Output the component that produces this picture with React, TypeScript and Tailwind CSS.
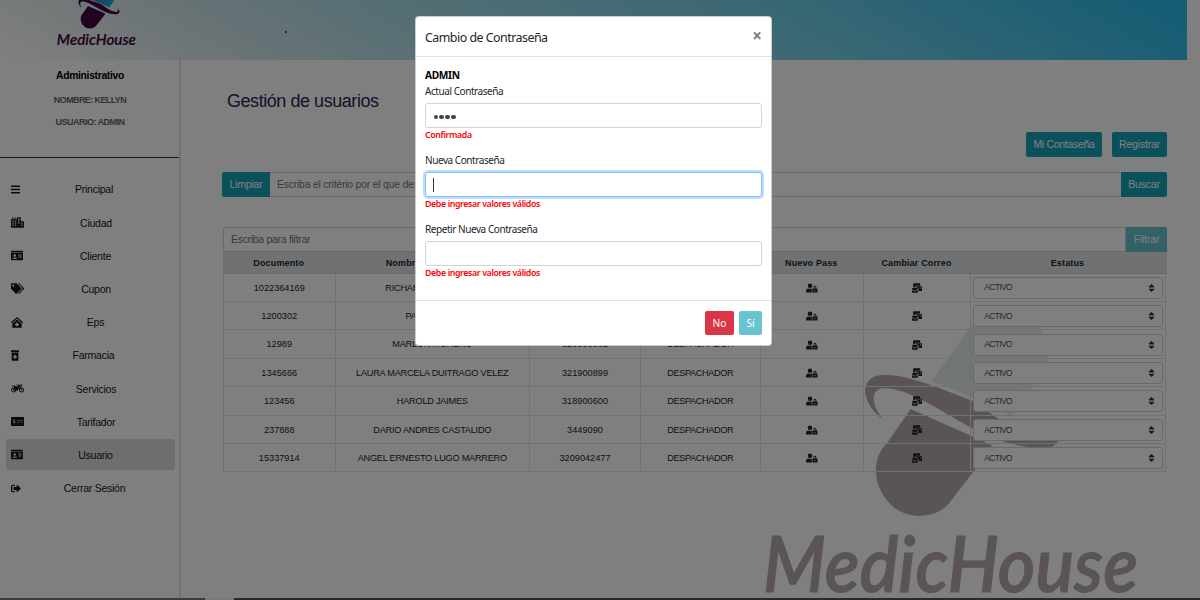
import React from "react";
import {
  FaBars, FaCity, FaIdCard, FaTags, FaClinicMedical, FaPrescriptionBottleAlt,
  FaMotorcycle, FaMoneyCheckAlt, FaSignOutAlt, FaUserLock, FaMailBulk, FaSort,
} from "react-icons/fa";

type LogoProps = { className: string; ink: string; from: string; to: string; id: string };

function Logo({ className, ink, from, to, id }: LogoProps) {
  return (
    <svg className={className} viewBox="740 300 420 300" preserveAspectRatio="none" overflow="visible">
      <defs>
        <linearGradient id={id} x1="0" y1="0" x2="1" y2="0.6">
          <stop offset="0" stopColor={from} />
          <stop offset="1" stopColor={to} />
        </linearGradient>
      </defs>
      <path d="M932 380.7 L973 323 L985 308 L1030 308 L1040 327 Q1046 340 1047 355 Q1047 364 1044 370 L1011.7 416.7 L973 398 Z" fill={`url(#${id})`} />
      <path d="M883.5 420 C870 410 865 398 865 390 C866 379 874 375 884 375 C905 374 940 388 973 401 L998 418.5 C1018 430 1042 443 1052 434 Q1054 428 1049 425 Q1062 425 1060 437 Q1056 449 1042 448.5 Q1015 446 1002 441 L973 428.5 C945 414 905 385 881 388.5 C869 392 873 407 883.5 420 Z" fill={ink} />
      <path d="M910.7 409 L991.7 445 L991 449 L950 502 C937 520 902 522 886 499 C873 482 872 458 886.7 443.5 Z" fill={ink} />
      <text x="763" y="592" fontFamily="Lato" fontSize="76" fontWeight="600" fontStyle="italic" textLength="375" lengthAdjust="spacingAndGlyphs" fill={ink} stroke={ink} strokeWidth="1">MedicHouse</text>
    </svg>
  );
}

const menu = [
  { label: "Principal", Icon: FaBars, w: "w-[9px]" },
  { label: "Ciudad", Icon: FaCity, w: "w-[13px]" },
  { label: "Cliente", Icon: FaIdCard, w: "w-[12px]" },
  { label: "Cupon", Icon: FaTags, w: "w-[13px]" },
  { label: "Eps", Icon: FaClinicMedical, w: "w-[12px]" },
  { label: "Farmacia", Icon: FaPrescriptionBottleAlt, w: "w-[8px]" },
  { label: "Servicios", Icon: FaMotorcycle, w: "w-[13px]" },
  { label: "Tarifador", Icon: FaMoneyCheckAlt, w: "w-[13px]" },
  { label: "Usuario", Icon: FaIdCard, w: "w-[12px]" },
  { label: "Cerrar Sesión", Icon: FaSignOutAlt, w: "w-[10px]" },
];

const rows = [
  ["1022364169", "RICHARD HERRERA R", "3102345678"],
  ["1200302", "PAUL PEREZ", "320900111"],
  ["12989", "MARLON MORENO", "320900082"],
  ["1345666", "LAURA MARCELA DUITRAGO VELEZ", "321900899"],
  ["123456", "HAROLD JAIMES", "318900600"],
  ["237888", "DARIO ANDRES CASTALIDO", "3449090"],
  ["15337914", "ANGEL ERNESTO LUGO MARRERO", "3209042477"],
];

const columns = ["Documento", "Nombres y Apellidos", "Telefono", "Rol", "Nuevo Pass", "Cambiar Correo", "Estatus"];
const grid = "grid grid-cols-[111.5px_194.5px_111px_119.5px_103.5px_107px_195px]";
const cell = "flex items-center justify-center border-r border-b border-[#dee2e6]";
const button = "flex items-center justify-center bg-[#17a2b8] text-white text-[10.5px]";

function Sidebar() {
  return (
    <aside className="w-[181px] shrink-0 border-r-2 border-[#e2e2e4] h-[540px]">
      <div className="h-[98px] border-b border-[#2b2b55] flex flex-col items-center text-[#666]">
        <b className="mt-[8px] ml-px h-[15px] leading-[15px] text-[10.3px] tracking-[-0.3px] text-black">Administrativo</b>
        <b className="mt-[10px] ml-px h-[15px] leading-[15px] text-[9px] tracking-[-0.6px]">NOMBRE: KELLYN</b>
        <b className="mt-[7px] ml-px h-[15px] leading-[15px] text-[9px] tracking-[-0.5px]">USUARIO: ADMIN</b>
      </div>
      <nav className="flex flex-col gap-[2.5px] pt-[15.5px] pl-[6px]">
        {menu.map(({ label, Icon, w }) => (
          <a key={label} className={`flex items-center w-[168.5px] h-[30.7px] rounded-[3px] pl-[5px] pr-[6.5px] ${label === "Usuario" ? "bg-[#dcdcdc]" : ""}`}>
            <Icon className={`${w} h-[11px] mt-px shrink-0 text-[#151515]`} />
            <span className="flex-1 pt-[3px] text-center text-[10.5px] tracking-[-0.25px] text-[#151515]">{label}</span>
          </a>
        ))}
      </nav>
    </aside>
  );
}

function UserTable() {
  return (
    <div className="pt-[30px] ml-[1px] w-[944px] text-[9.2px] text-[#212529]">
      <div className="flex h-[25px]">
        <div className="flex-1 border border-[#ced4da] rounded-tl-[3px] flex items-center pl-[7px] pt-[1px] text-[10.5px] tracking-[-0.3px] text-[#6c757d] bg-white">Escriba para filtrar</div>
        <div className="w-[41px] flex items-center justify-center bg-[#69c0d0] text-white text-[10.5px] tracking-[-0.2px] rounded-tr-[2px]">Filtrar</div>
      </div>
      <div className={`${grid} h-[21.5px] bg-[#dee2e6] font-bold text-[9px] tracking-[0.15px] border-b border-[#ced4da]`}>
        {columns.map((c) => <div key={c} className="flex items-center justify-center pt-[2px]">{c}</div>)}
      </div>
      <div className="border-l border-[#dee2e6]">
        {rows.map(([id, name, phone]) => (
          <div key={id} className={`${grid} h-[28.43px]`}>
            <div className={`${cell} pt-[2.5px]`}>{id}</div>
            <div className={`${cell} pt-[2.5px] tracking-[-0.25px]`}>{name}</div>
            <div className={`${cell} pt-[2.5px]`}>{phone}</div>
            <div className={`${cell} pt-[2.5px] tracking-[-0.4px]`}>DESPACHADOR</div>
            <div className={`${cell} pt-px`}><FaUserLock className="w-[11.5px] h-[10px]" /></div>
            <div className={`${cell} pt-px`}><FaMailBulk className="w-[10.5px] h-[10px]" /></div>
            <div className={cell}>
              <div className="w-[189.5px] h-[22px] mt-px bg-white border border-[#ced4da] rounded-[3px] flex items-center justify-between pl-[10px] pr-[7px] text-[8.4px] tracking-[-0.6px] text-[#495057]">
                <span>ACTIVO</span>
                <FaSort className="w-[7px] h-[10px] text-[#343a40]" />
              </div>
            </div>
          </div>
        ))}
      </div>
    </div>
  );
}

function Field({ label, message, value, focused }: { label: string; message: string; value?: string; focused?: boolean }) {
  return (
    <div className="h-[69.2px]">
      <div className="h-[20px] leading-[16px] text-[10px] tracking-[-0.44px]">{label}</div>
      <div className={`h-[25px] rounded-[3px] border flex items-center pl-[7px] ${focused ? "border-[#80bdff] shadow-[0_0_0_2px_#bfdeff]" : "border-[#ced4da]"}`}>
        {focused && <span className="w-px h-[14px] bg-[#333]" />}
        {value && (
          <span className="flex gap-[1.8px] pt-[3px] pl-[0.5px]">
            {value.split("").map((_, i) => <i key={i} className="size-[4.2px] rounded-full bg-[#3d444b]" />)}
          </span>
        )}
      </div>
      <div className="leading-[15.5px] text-[8.8px] tracking-[-0.38px] font-semibold text-[#ff0000]">{message}</div>
    </div>
  );
}

function PasswordDialog() {
  return (
    <section className="w-[357px] h-[330px] bg-white rounded-[4px] border border-[#00000033] text-[#212529] font-['Noto_Sans',sans-serif] flex flex-col">
      <header className="h-[40px] border-b border-[#dee2e6] px-[9px] flex items-center justify-between">
        <h5 className="pt-[3px] text-[12.4px] tracking-[-0.5px]">Cambio de Contraseña</h5>
        <b className="text-[17px] leading-none text-[#7f7f7f] pb-[2px]">×</b>
      </header>
      <div className="h-[244px] px-[9px] pt-[11px] border-b border-[#dee2e6]">
        <div className="font-bold text-[10.2px] tracking-[-0.35px] leading-[15px] text-black">ADMIN</div>
        <Field label="Actual Contraseña" message="Confirmada" value="1234" />
        <Field label="Nueva Contraseña" message="Debe ingresar valores válidos" focused />
        <Field label="Repetir Nueva Contraseña" message="Debe ingresar valores válidos" />
      </div>
      <footer className="flex-1 flex items-center justify-end gap-[5px] pr-[9px] text-white text-[10.2px]">
        <button className="w-[29px] h-[24px] pt-px rounded-[2px] bg-[#dc3545]">No</button>
        <button className="w-[23px] h-[24px] pt-px rounded-[2px] bg-[#69c3d3]">Sí</button>
      </footer>
    </section>
  );
}

export default function App() {
  return (
    <div className="relative w-[1200px] h-[600px] overflow-hidden bg-white font-['Liberation_Sans',sans-serif]">
      <header className="w-[1187px] h-[60px] bg-[linear-gradient(30deg,#ffffff_0%,#f4f8f9_6%,#d4e6ea_20%,#acdfe9_36%,#74cfe8_66%,#24b8e8_100%)]">
        <Logo className="ml-[51.5px] w-[88.6px] h-[63.3px] relative -top-[16.8px]" ink="#40063f" from="#285fa8" to="#18b7dd" id="brand" />
      </header>
      <div className="flex">
        <Sidebar />
        <main className="ml-[41px] w-[945px]">
          <h1 className="mt-[29px] ml-[5px] h-[24px] leading-[24px] text-[18px] tracking-[-0.45px] text-[#1f2858]">Gestión de usuarios</h1>
          <div className="mt-[19px] flex justify-end gap-[10px]">
            <button className={`${button} w-[76px] h-[25px] rounded-[2px] tracking-[-0.3px]`}>Mi Contaseña</button>
            <button className={`${button} w-[55px] h-[25px] rounded-[2px] tracking-[-0.2px]`}>Registrar</button>
          </div>
          <div className="mt-[15px] flex h-[25px]">
            <button className={`${button} w-[48px] rounded-l-[2px] tracking-[-0.2px]`}>Limpiar</button>
            <div className="flex-1 border-y border-[#ced4da] flex items-center pl-[7px] text-[10.4px] tracking-[-0.2px] text-[#6c757d]">Escriba el critério por el que desea buscar</div>
            <button className={`${button} w-[46px] rounded-r-[2px] tracking-[-0.2px]`}>Buscar</button>
          </div>
          <div className="relative">
            <Logo className="absolute left-[518px] top-[103px] w-[420px] h-[300px]" ink="#b4a8ae" from="#e2eaea" to="#e8eeec" id="watermark" />
            <div className="relative"><UserTable /></div>
          </div>
        </main>
      </div>
      <div className="absolute bottom-0 left-0 w-full h-[2px] bg-[#555] flex"><span className="w-[205px] bg-[#777]" /><span className="w-[29px] bg-[#eee]" /></div>
      <span className="absolute left-[285px] top-[31px] size-[2px] bg-[#457]" />
      <div className="absolute inset-0 bg-black/50 flex justify-center items-start pt-[16px] pr-[13px]">
        <PasswordDialog />
      </div>
    </div>
  );
}
